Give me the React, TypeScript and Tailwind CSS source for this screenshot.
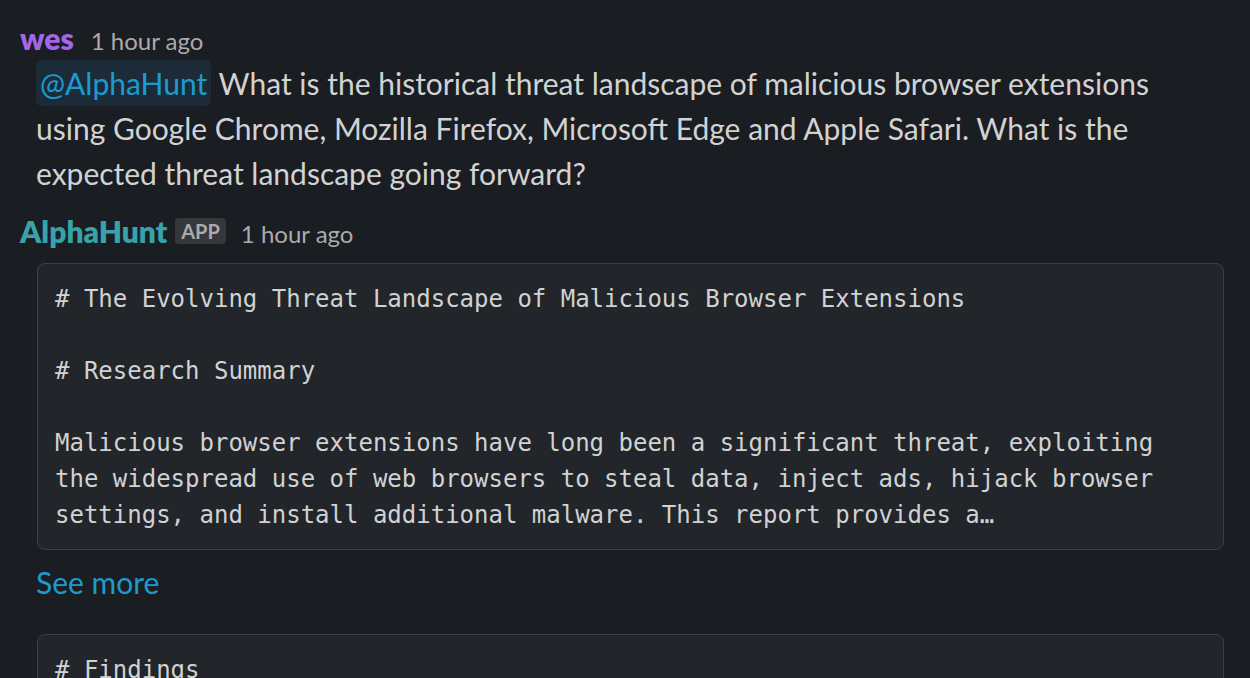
import React from 'react';

const lato = { fontFamily: 'Lato, "Noto Sans", sans-serif' };

const CodeBlock: React.FC<{ lines: string[] }> = ({ lines }) => (
    <div className="ml-[37px] mr-[26px] rounded-[8px] border border-[#3e4044] bg-[#222529] px-[17px] pt-[17px] pb-[16px]">
        <pre
            className="text-[24px] leading-[36px] text-[#d1d2d3] whitespace-pre-wrap"
            style={{ fontFamily: '"DejaVu Sans Mono", monospace' }}
        >
            {lines.join('\n')}
        </pre>
    </div>
);

export default function App() {
    return (
        <div className="w-[1250px] h-[678px] overflow-hidden bg-[#1a1d21]" style={lato}>
            <div className="pt-[20px]">
                {/* user message */}
                <div className="flex items-baseline gap-[17px] pl-[20px] h-[36px]">
                    <span className="text-[30px] font-extrabold text-[#a366e8] leading-[36px]">wes</span>
                    <span className="text-[24px] text-[#ababad] leading-[36px]">1 hour ago</span>
                </div>
                <div className="mt-[5px] pl-[36px] pr-[60px] text-[30px] leading-[45px] text-[#d1d2d3]">
                    <span className="rounded-[6px] bg-[#1c2b38] px-[4px] py-[5px] text-[#1d9bd1]">@AlphaHunt</span>{' '}
                    What is the historical threat landscape of malicious browser extensions using Google Chrome, Mozilla Firefox, Microsoft Edge and Apple Safari. What is the expected threat landscape going forward?
                </div>

                {/* app reply */}
                <div className="mt-[17px] flex items-baseline pl-[20px] h-[36px]">
                    <span className="text-[30px] font-extrabold text-[#37a3a8] leading-[36px]">AlphaHunt</span>
                    <span className="ml-[8px] self-center rounded-[4px] bg-[#35373b] px-[6px] text-[20px] font-bold leading-[26px] text-[#ababad]">APP</span>
                    <span className="ml-[15px] text-[24px] text-[#ababad] leading-[36px]">1 hour ago</span>
                </div>
                <div className="mt-[14px]">
                    <CodeBlock
                        lines={[
                            '# The Evolving Threat Landscape of Malicious Browser Extensions',
                            '',
                            '# Research Summary',
                            '',
                            'Malicious browser extensions have long been a significant threat, exploiting',
                            'the widespread use of web browsers to steal data, inject ads, hijack browser',
                            'settings, and install additional malware. This report provides a…',
                        ]}
                    />
                </div>
                <div className="pl-[36px] mt-[12px] text-[30px] leading-[40px] text-[#1d9bd1]">See more</div>
                <div className="mt-[32px]">
                    <CodeBlock lines={['# Findings', '', 'Historically, malicious browser extensions have']} />
                </div>
            </div>
        </div>
    );
}
